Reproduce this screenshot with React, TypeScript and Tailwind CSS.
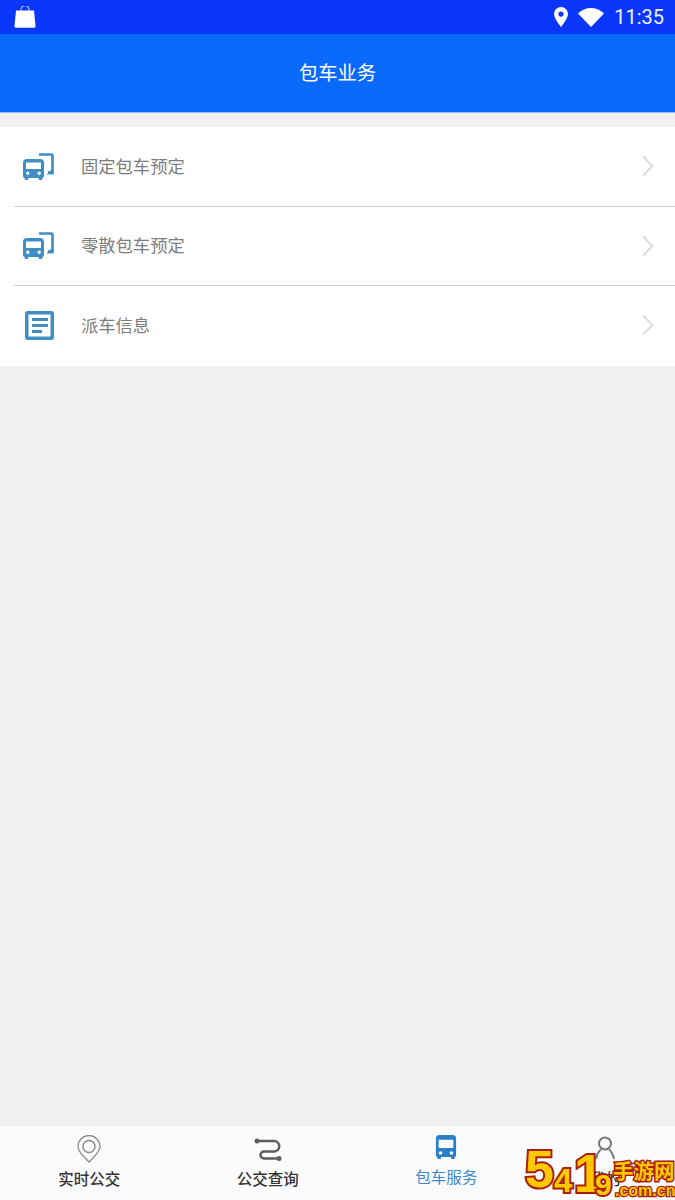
import React from 'react';

const font = "font-['Roboto','Noto_Sans_CJK_SC',sans-serif]";

function TransferBus() {
  return (
    <svg width="31" height="27" viewBox="0 0 31 27" fill="none">
      <path d="M16 1.500h12.500a1 1 0 0 1 1 1V19.500H25" stroke="#3f8fc4" strokeWidth="2.600" />
      <path d="M30.500 15.500v6h-7l2.800-3z" fill="#3f8fc4" />
      <path fillRule="evenodd" d="M4 6h13a4 4 0 0 1 4 4v13a2 2 0 0 1-1.600 2v.8a1.200 1.200 0 0 1-1.200 1.200h-1.400a1.200 1.200 0 0 1-1.200-1.200V25H5.400v.8A1.200 1.200 0 0 1 4.200 27H2.800a1.200 1.200 0 0 1-1.200-1.200V25A2 2 0 0 1 0 23V10a4 4 0 0 1 4-4zM3 9.500V16h15V9.500zM4.800 18.500a1.700 1.700 0 1 0 0 3.400 1.700 1.700 0 0 0 0-3.400zM16.200 18.500a1.700 1.700 0 1 0 0 3.400 1.700 1.700 0 0 0 0-3.400z" fill="#3f8fc4" />
    </svg>
  );
}

function InfoDoc() {
  return (
    <svg className="ml-[2px]" width="29" height="29" viewBox="0 0 29 29" fill="none">
      <rect x="1.750" y="1.750" width="25.500" height="25.500" rx="1" stroke="#3f8fc4" strokeWidth="3.500" />
      <path d="M7 8.500h16M7 14.500h16M7 20.500h10" stroke="#3f8fc4" strokeWidth="3" />
    </svg>
  );
}

function Row({ label, icon, last }: { label: string; icon: React.ReactNode; last?: boolean }) {
  return (
    <div className="h-[79.500px] flex items-stretch pl-[14px]">
      <div className={`flex-1 flex items-center border-b ${last ? 'border-transparent' : 'border-[#cfcfd1]'}`}>
        <div className="w-[67px] pl-[9px] flex items-center">{icon}</div>
        <span className="pt-[3px] text-[17.300px] text-[#7d7d7d]">{label}</span>
        <svg className="ml-auto mr-[20px]" width="14" height="22" viewBox="0 0 14 22" fill="none">
          <path d="M2 1.500 11.500 11 2 20.500" stroke="#dcdcdf" strokeWidth="2" />
        </svg>
      </div>
    </div>
  );
}

function NavItem({ label, icon, className }: { label: React.ReactNode; icon: React.ReactNode; className: string }) {
  return (
    <div className={`flex flex-col items-center pt-[8px] ${className}`}>
      <div className="h-[30px] flex items-center justify-center">{icon}</div>
      {label}
    </div>
  );
}

export default function App() {
  return (
    <div className={`${font} relative w-[675px] h-[1200px] overflow-hidden bg-[#f0eff2] flex flex-col`}>
      <div className="h-[34px] bg-[#0a36fa] flex items-center justify-between pl-[14px] pr-[11px] text-white">
        <svg width="22" height="22" viewBox="0 0 22 22" fill="none">
          <path d="M7 5V3.500a4 4 0 0 1 8 0V5" stroke="#d8e2ff" strokeWidth="1" />
          <path d="M2 4.500h18l1.500 15.500a1.500 1.500 0 0 1-1.500 1.800H2A1.500 1.500 0 0 1 .5 20z" fill="#fff" />
        </svg>
        <div className="flex items-center">
          <svg width="14" height="20" viewBox="0 0 14 20">
            <path fillRule="evenodd" d="M7 0a7 7 0 0 1 7 7c0 4.500-7 13-7 13S0 11.500 0 7a7 7 0 0 1 7-7zm0 4.500a2.600 2.600 0 1 0 0 5.200 2.600 2.600 0 0 0 0-5.200z" fill="#fff" />
          </svg>
          <svg className="ml-[10px]" width="26" height="19" viewBox="0 0 26 19">
            <path d="M0 5.500C3.500 2 8 0 13 0s9.500 2 13 5.500L13 19z" fill="#fff" />
          </svg>
          <span className="ml-[10px] text-[20px] leading-none text-[#eef2ff]">11:35</span>
        </div>
      </div>

      <div className="h-[79px] pt-[2px] bg-[#0a6afc] border-b border-[#8fc0fb] flex items-center justify-center text-white text-[19.300px]">
        包车业务
      </div>

      <div className="mt-[14px] bg-white">
        <Row label="固定包车预定" icon={<TransferBus />} />
        <Row label="零散包车预定" icon={<TransferBus />} />
        <Row label="派车信息" icon={<InfoDoc />} last />
      </div>

      <div className="mt-auto h-[74px] bg-[#fbfbfd] flex">
        <NavItem
          className="w-[178.500px]"
          label={<span className="mt-[6px] text-[15.500px] leading-[20px] font-medium text-[#333333]">实时公交</span>}
          icon={
            <svg width="24" height="28" viewBox="0 0 24 28" fill="none" stroke="#8a8a8a" strokeWidth="1.300">
              <path d="M12 27C8 22.500 1 17.500 1 11.500a11 11 0 0 1 22 0C23 17.500 16 22.500 12 27z" />
              <circle cx="12" cy="11.500" r="6" strokeWidth="1.500" />
            </svg>
          }
        />
        <NavItem
          className="w-[178.500px]"
          label={<span className="mt-[6px] text-[15.500px] leading-[20px] font-medium text-[#333333]">公交查询</span>}
          icon={
            <svg className="mt-[2px]" width="28" height="24" viewBox="0 0 28 24" fill="none" stroke="#5e5e5e" strokeWidth="2.500">
              <circle cx="3" cy="3" r="2.500" fill="#5e5e5e" stroke="none" />
              <circle cx="25" cy="20.500" r="2.500" fill="#5e5e5e" stroke="none" />
              <path d="M3 3h17a5 5 0 0 1 0 10.500H10a3.500 3.500 0 0 0 0 7h15" />
            </svg>
          }
        />
        <NavItem
          className="w-[178.500px]"
          label={<span className="mt-[4px] text-[15.500px] leading-[20px] text-[#3f86c8]">包车服务</span>}
          icon={
            <svg className="mb-[5px]" width="22" height="24" viewBox="0 0 24 26">
              <path fillRule="evenodd" d="M5 0h14a4 4 0 0 1 4 4v18a2 2 0 0 1-1.500 1.900V25a1 1 0 0 1-1 1h-2a1 1 0 0 1-1-1v-1H6.500v1a1 1 0 0 1-1 1h-2a1 1 0 0 1-1-1v-1.100A2 2 0 0 1 1 22V4a4 4 0 0 1 4-4zM4 5v9h16V5zM6 17.500a2 2 0 1 0 0 4 2 2 0 0 0 0-4zM18 17.500a2 2 0 1 0 0 4 2 2 0 0 0 0-4z" fill="#2a7fc4" />
            </svg>
          }
        />
        <NavItem
          className="flex-1"
          label={<span className="mt-[6px] text-[15.500px] leading-[20px] font-medium text-[#333333]">我的</span>}
          icon={
            <svg className="mb-[3px]" width="20" height="24" viewBox="0 0 20 24" fill="none" stroke="#777777" strokeWidth="2">
              <circle cx="10" cy="7.500" r="6" />
              <path d="M1 23c1-5 3-8 5-9.500M19 23c-1-5-3-8-5-9.500" />
            </svg>
          }
        />
      </div>

      {/* site watermark over the corner */}
      <div className="font-['Liberation_Sans'] font-bold leading-none text-[#ffc800] [-webkit-text-stroke:4px_#a8200c] [paint-order:stroke_fill]">
        <span className="absolute left-[525px] top-[1143px] text-[52px]">5</span>
        <span className="absolute left-[554px] top-[1164px] text-[33px]">4</span>
        <span className="absolute left-[574px] top-[1147px] text-[53px]">1</span>
        <span className="absolute left-[595px] top-[1170px] text-[30px]">9</span>
      </div>
      <div className="absolute left-[613px] top-[1160px] text-[20.500px] leading-[24px] font-bold text-[#ffc800] [-webkit-text-stroke:3px_#a8200c] [paint-order:stroke_fill]">手游网</div>
      <div className="absolute left-[615px] top-[1182px] text-[16px] leading-[18px] font-['Liberation_Sans'] font-bold text-[#ffc800] [-webkit-text-stroke:2.500px_#a8200c] [paint-order:stroke_fill]">.com.cn</div>
    </div>
  );
}
